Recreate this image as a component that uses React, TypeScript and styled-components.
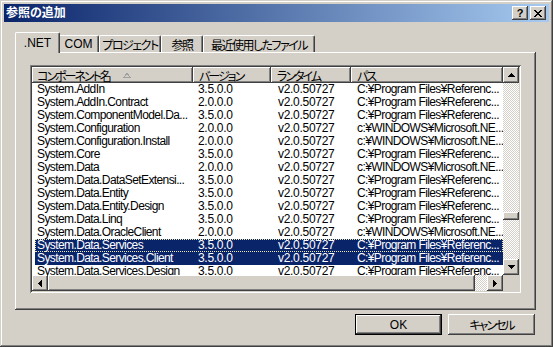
import React from "react";
import styled, { createGlobalStyle } from "styled-components";

const FACE = "#d4d0c8";
const NAVY = "#0a246a";

const GlobalStyle = createGlobalStyle`
  html, body {
    margin: 0;
    padding: 0;
    background: ${FACE};
  }
  body {
    font-family: "Liberation Sans", "Noto Sans CJK JP", sans-serif;
    font-size: 12px;
    font-feature-settings: "palt";
    color: #000;
  }
`;

const raised = `box-shadow: inset -1px -1px #404040, inset 1px 1px #ffffff, inset -2px -2px #808080, inset 2px 2px ${FACE};`;

const Window = styled.div`
  width: 553px;
  height: 347px;
  box-sizing: border-box;
  padding: 4px;
  background: ${FACE};
  box-shadow: inset -1px -1px #404040, inset 1px 1px ${FACE}, inset -2px -2px #808080, inset 2px 2px #ffffff;
  display: flex;
  flex-direction: column;
`;

const TitleBar = styled.div`
  height: 18px;
  display: flex;
  align-items: center;
  padding: 0 3px 0 2px;
  background: linear-gradient(to right, ${NAVY}, #a6caf0);
`;

const Title = styled.div`
  flex: 1;
  color: #fff;
  font-weight: bold;
  font-size: 12px;
  line-height: 18px;
`;

const CaptionButton = styled.div`
  width: 16px;
  height: 14px;
  margin-left: 2px;
  background: ${FACE};
  ${raised}
  display: grid;
  place-items: center;
  font-weight: bold;
  font-size: 11px;
  line-height: 14px;
`;

const Body = styled.div`
  padding: 10px 13px 0 11px;
  display: flex;
  flex-direction: column;
`;

const TabStrip = styled.div`
  height: 20px;
  display: flex;
  align-items: flex-end;
  padding-left: 2px;
`;

const Tab = styled.div<{ $active?: boolean; $w: number; $ja?: boolean }>`
  position: relative;
  z-index: ${(p) => (p.$active ? 2 : 1)};
  box-sizing: border-box;
  width: ${(p) => (p.$active ? p.$w + 4 : p.$w)}px;
  height: ${(p) => (p.$active ? 21 : 17)}px;
  margin: 0 ${(p) => (p.$active ? -2 : 0)}px ${(p) => (p.$active ? -1 : 0)}px;
  background: ${FACE};
  border-top: 1px solid #fff;
  border-left: 1px solid #fff;
  border-right: 1px solid #404040;
  border-radius: 2px 2px 0 0;
  box-shadow: inset -1px 0 #808080;
  display: flex;
  align-items: center;
  justify-content: center;
  padding-bottom: ${(p) => (p.$active ? 1 : 0)}px;
  white-space: nowrap;
  letter-spacing: ${(p) => (p.$ja ? "-1.5px" : "0")};
`;

const Panel = styled.div`
  width: 521px;
  height: 258px;
  box-sizing: border-box;
  padding: 13px 15px 17px;
  background: ${FACE};
  box-shadow: inset -1px -1px #404040, inset 1px 1px #ffffff, inset -2px -2px #808080;
`;

const List = styled.div`
  width: 491px;
  height: 228px;
  box-sizing: border-box;
  padding: 2px;
  background: #fff;
  box-shadow: inset 1px 1px #808080, inset -1px -1px #ffffff, inset 2px 2px #404040, inset -2px -2px ${FACE};
  display: grid;
  grid-template-columns: 1fr 16px;
  grid-template-rows: 1fr 16px;
`;

const ListBody = styled.div`
  overflow: hidden;
  display: flex;
  flex-direction: column;
`;

const HeaderRow = styled.div`
  display: grid;
  grid-template-columns: 161px 78px 80px 152px;
  height: 16px;
  flex: none;
`;

const HeaderCell = styled.div<{ $pad: number }>`
  background: ${FACE};
  box-shadow: inset -1px -1px #404040, inset 1px 1px #ffffff, inset -2px -2px #808080;
  padding-left: ${(p) => p.$pad}px;
  display: flex;
  align-items: center;
  white-space: nowrap;
  overflow: hidden;
  letter-spacing: -2px;
`;

const SortArrow = styled.svg`
  margin-left: 13px;
  margin-top: 1px;
`;

const Row = styled.div<{ $selected?: boolean; $focused?: boolean }>`
  flex: none;
  display: grid;
  grid-template-columns: 158px 78px 80px 152px;
  height: 13px;
  line-height: 13px;
  margin-left: 3px;
  letter-spacing: -0.3px;
  background: ${(p) => (p.$selected ? NAVY : "transparent")};
  color: ${(p) => (p.$selected ? "#fff" : "#000")};
  outline: ${(p) => (p.$focused ? "1px dotted #e8e8b0" : "none")};
  outline-offset: -1px;
`;

const Cell = styled.div<{ $pad: number; $tight?: boolean }>`
  padding-left: ${(p) => p.$pad}px;
  white-space: nowrap;
  overflow: hidden;
  letter-spacing: ${(p) => (p.$tight ? "-0.6px" : "inherit")};
`;

const ScrollV = styled.div`
  display: flex;
  flex-direction: column;
`;

const ScrollH = styled.div`
  display: flex;
`;

const ArrowButton = styled.div`
  width: 16px;
  height: 16px;
  flex: none;
  box-sizing: border-box;
  background: ${FACE};
  ${raised}
  display: grid;
  place-items: center;
`;

const Track = styled.div<{ $size: number }>`
  flex: ${(p) => (p.$size ? `0 0 ${p.$size}px` : "1")};
  background-color: ${FACE};
  background-image: conic-gradient(#fff 25%, transparent 0 50%, #fff 0 75%, transparent 0);
  background-size: 2px 2px;
`;

const Thumb = styled.div<{ $size: number }>`
  flex: 0 0 ${(p) => p.$size}px;
  background: ${FACE};
  ${raised}
`;

const Corner = styled.div`
  background: ${FACE};
`;

const ButtonRow = styled.div`
  display: flex;
  justify-content: flex-end;
  gap: 6px;
  margin-top: 4px;
  padding-right: 1px;
`;

const PushButton = styled.div<{ $default?: boolean }>`
  width: 87px;
  height: 21px;
  box-sizing: border-box;
  background: ${FACE};
  display: grid;
  place-items: center;
  letter-spacing: ${(p) => (p.$default ? "0" : "-2px")};
  box-shadow: ${(p) =>
    p.$default
      ? "inset 0 0 0 1px #000, inset -2px -2px #404040, inset 2px 2px #ffffff, inset -3px -3px #808080"
      : `inset -1px -1px #404040, inset 1px 1px #ffffff, inset -2px -2px #808080, inset 2px 2px ${FACE}`};
`;

const Arrow = ({ dir }: { dir: "up" | "down" | "left" | "right" }) => {
  const pts = {
    up: "0,4 3.5,0 7,4",
    down: "0,0 7,0 3.5,4",
    left: "4,0 4,7 0,3.5",
    right: "0,0 4,3.5 0,7",
  }[dir];
  const vertical = dir === "up" || dir === "down";
  return (
    <svg width={vertical ? 7 : 4} height={vertical ? 4 : 7} viewBox={vertical ? "0 0 7 4" : "0 0 4 7"} shapeRendering="crispEdges">
      <polygon points={pts} fill="#000" />
    </svg>
  );
};

const CloseGlyph = () => (
  <svg width="8" height="7" viewBox="0 0 8 7" shapeRendering="crispEdges">
    <path d="M0 0h2v1H0zM6 0h2v1H6zM1 1h2v1H1zM5 1h2v1H5zM2 2h4v1H2zM3 3h2v1H3zM2 4h4v1H2zM1 5h2v1H1zM5 5h2v1H5zM0 6h2v1H0zM6 6h2v1H6z" fill="#000" />
  </svg>
);

const PF = "C:¥Program Files¥Referenc...";
const WIN = "c:¥WINDOWS¥Microsoft.NE...";

const rows: [string, string, string][] = [
  ["System.AddIn", "3.5.0.0", PF],
  ["System.AddIn.Contract", "2.0.0.0", PF],
  ["System.ComponentModel.Da...", "3.5.0.0", PF],
  ["System.Configuration", "2.0.0.0", WIN],
  ["System.Configuration.Install", "2.0.0.0", WIN],
  ["System.Core", "3.5.0.0", PF],
  ["System.Data", "2.0.0.0", WIN],
  ["System.Data.DataSetExtensi...", "3.5.0.0", PF],
  ["System.Data.Entity", "3.5.0.0", PF],
  ["System.Data.Entity.Design", "3.5.0.0", PF],
  ["System.Data.Linq", "3.5.0.0", PF],
  ["System.Data.OracleClient", "2.0.0.0", WIN],
  ["System.Data.Services", "3.5.0.0", PF],
  ["System.Data.Services.Client", "3.5.0.0", PF],
  ["System.Data.Services.Design", "3.5.0.0", PF],
];

const tabs = [
  { label: ".NET", w: 41, ja: false },
  { label: "COM", w: 41, ja: false },
  { label: "プロジェクト", w: 62, ja: true },
  { label: "参照", w: 42, ja: true },
  { label: "最近使用したファイル", w: 112, ja: true },
];

const App = () => {
  return (
    <>
      <GlobalStyle />
      <Window>
        <TitleBar>
          <Title>参照の追加</Title>
          <CaptionButton>?</CaptionButton>
          <CaptionButton>
            <CloseGlyph />
          </CaptionButton>
        </TitleBar>
        <Body>
          <TabStrip>
            {tabs.map((t, i) => (
              <Tab key={t.label} $w={t.w} $ja={t.ja} $active={i === 0}>
                {t.label}
              </Tab>
            ))}
          </TabStrip>
          <Panel>
            <List>
              <ListBody>
                <HeaderRow>
                  <HeaderCell $pad={5}>
                    コンポーネント名
                    <SortArrow width="8" height="5" viewBox="0 0 8 5" shapeRendering="crispEdges">
                      <path d="M0.5 4.5L4 0.5L7.5 4.5Z" fill="none" stroke="#a0a0a0" />
                    </SortArrow>
                  </HeaderCell>
                  <HeaderCell $pad={6}>バージョン</HeaderCell>
                  <HeaderCell $pad={6}>ランタイム</HeaderCell>
                  <HeaderCell $pad={6}>パス</HeaderCell>
                </HeaderRow>
                {rows.map(([name, ver, path], i) => (
                  <Row key={name} $selected={i === 12 || i === 13} $focused={i === 12}>
                    <Cell $pad={2} $tight>
                      {name}
                    </Cell>
                    <Cell $pad={5}>{ver}</Cell>
                    <Cell $pad={7}>v2.0.50727</Cell>
                    <Cell $pad={6} $tight>
                      {path}
                    </Cell>
                  </Row>
                ))}
              </ListBody>
              <ScrollV>
                <ArrowButton>
                  <Arrow dir="up" />
                </ArrowButton>
                <Track $size={129} />
                <Thumb $size={8} />
                <Track $size={0} />
                <ArrowButton>
                  <Arrow dir="down" />
                </ArrowButton>
              </ScrollV>
              <ScrollH>
                <ArrowButton>
                  <Arrow dir="left" />
                </ArrowButton>
                <Thumb $size={427} />
                <Track $size={0} />
                <ArrowButton>
                  <Arrow dir="right" />
                </ArrowButton>
              </ScrollH>
              <Corner />
            </List>
          </Panel>
          <ButtonRow>
            <PushButton $default>OK</PushButton>
            <PushButton>キャンセル</PushButton>
          </ButtonRow>
        </Body>
      </Window>
    </>
  );
};

export default App;
